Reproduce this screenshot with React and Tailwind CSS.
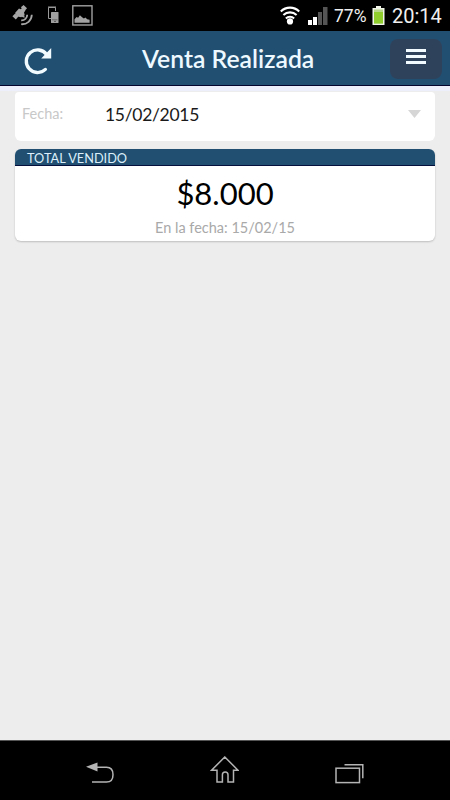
import React from 'react';

const SatelliteIcon = () => (
  <svg className="w-[22px] h-[21px]" viewBox="0 0 22 21" fill="none">
    <g fill="#a6a6a6">
      <path d="M3 8l4-4.6 1.6.8 2-1.6 2.8 3-1.4 2 .6 2.2-3.4 2.4-3.8-.6z" />
      <path d="M8.8 2.2L11.6 0 15 3.2l-2.2 2.6z" />
      <path d="M.4 11.2l2.8-2.6 3.2 3-2.6 3z" />
      <path d="M9.4 11.8l2.8-2.4.4 3.4z" />
    </g>
    <path d="M9.2 15.4c3.4.2 6-2.2 6-5.6M9.2 19.2c5.8.4 10.4-3.6 10.6-9.4" stroke="#a6a6a6" strokeWidth="1.8" />
  </svg>
);

const DevicesIcon = () => (
  <svg className="w-3 h-[18px]" viewBox="0 0 12 18" fill="none">
    <path d="M4 12.5H1.5V1.5H8.5V5" stroke="#999" strokeWidth="1" />
    <path d="M1 1h8" stroke="#999" strokeWidth="1" />
    <rect x="4" y="6" width="7.5" height="11" rx=".6" fill="#a0a0a0" />
    <path d="M5 13.8H10.5" stroke="#555" strokeWidth=".7" />
    <path d="M7 15.4h2" stroke="#444" strokeWidth=".8" />
  </svg>
);

const PictureIcon = () => (
  <svg className="w-[21px] h-[21px]" viewBox="0 0 21 21" fill="none">
    <rect x=".8" y=".8" width="19.2" height="19.2" stroke="#a0a0a0" strokeWidth="1.4" />
    <path d="M2.5 17.8v-3.6l2.1-2.3 1.5.8 1.8-2.5 2.2 2 1.8 1.4 1.5-1 1.8 1.6 2.4.6v3z" fill="#a3a3a3" />
  </svg>
);

const WifiIcon = () => (
  <svg className="w-5 h-[19px]" viewBox="0 0 20 19" fill="none" stroke="#fff" strokeWidth="2.1">
    <path d="M.8 5.4a13 13 0 0 1 18.4 0M3.4 9a9.6 9.6 0 0 1 13.2 0M5.9 12.4a5.8 5.8 0 0 1 8.2 0" />
    <circle cx="10" cy="15.4" r="3.1" fill="#fff" stroke="none" />
  </svg>
);

const SignalIcon = () => (
  <svg className="w-5 h-[18px]" viewBox="0 0 20 18">
    <rect x="0" y="13" width="4" height="5" fill="#fff" />
    <rect x="5" y="10" width="4" height="8" fill="#fff" />
    <rect x="10" y="5" width="4" height="13" fill="#555" />
    <rect x="15" y="0" width="4.5" height="18" fill="#555" />
  </svg>
);

const BatteryIcon = () => (
  <svg className="w-[13px] h-[19px]" viewBox="0 0 13 19">
    <path d="M4 0h5v2h3.5v17H.5V2H4z" fill="#f1f5ea" />
    <rect x="2" y="3.5" width="9" height="14" fill="#b9d88a" />
    <rect x="2" y="6" width="9" height="11.5" fill="#8fce2c" />
  </svg>
);

const RefreshIcon = () => (
  <svg className="w-7 h-7" viewBox="0 0 28 28" fill="none">
    <path d="M21.4 22.4A11.3 11.3 0 1 1 22.6 7.4" stroke="#f2fbff" strokeWidth="3.3" strokeLinecap="round" />
    <path d="M27.2 1v10.4H17.2l3.6-3.6z" fill="#f2fbff" />
  </svg>
);

const BackIcon = () => (
  <svg className="w-7 h-[22px]" viewBox="0 0 28 22" fill="none">
    <path d="M11 5.3h9.5c4.2 0 6.5 3 6.5 7.4s-2.3 7.3-6.5 7.3H6" stroke="#b4b4b4" strokeWidth="1.5" />
    <path d="M0 4.8L11.5.5v9z" fill="#b4b4b4" />
  </svg>
);

const HomeIcon = () => (
  <svg className="w-[29px] h-[27px]" viewBox="0 0 29 27" fill="none" stroke="#b4b4b4" strokeWidth="1.5">
    <path d="M14.8 1L28 14.2H23.5V26H18V18.8a2.8 2.8 0 0 0-5.6 0V26H7V14.2H1.6z" />
  </svg>
);

const RecentIcon = () => (
  <svg className="w-[29px] h-[21px]" viewBox="0 0 29 21" fill="none" stroke="#b4b4b4" strokeWidth="1.5">
    <rect x="1" y="5.2" width="23.5" height="14.4" />
    <path d="M9.5 1.7h18.3v13.5" />
  </svg>
);

const StatusBar = () => (
  <div className="h-[31px] shrink-0 bg-black flex items-start justify-between pl-3 pr-2">
    <div className="flex items-start">
      <div className="pt-[5px]"><SatelliteIcon /></div>
      <div className="pt-[6px] pl-[13px]"><DevicesIcon /></div>
      <div className="pt-[5px] pl-[13px]"><PictureIcon /></div>
    </div>
    <div className="flex items-start text-[#f0f0f0] font-[Roboto,sans-serif]">
      <div className="pt-[6px]"><WifiIcon /></div>
      <div className="pt-[7px] pl-2"><SignalIcon /></div>
      <span className="w-11 pl-[6px] text-[17.5px] leading-[33px] whitespace-nowrap">77%</span>
      <div className="pt-[6px]"><BatteryIcon /></div>
      <span className="w-[50px] ml-[7px] text-[20px] leading-[32px] whitespace-nowrap">20:14</span>
    </div>
  </div>
);

const Header = () => (
  <div className="h-[55px] shrink-0 bg-[#214f71] border-b border-[#04052e] flex items-start pl-6 pr-2">
    <button className="w-[118px] pt-4"><RefreshIcon /></button>
    <h1 className="flex-1 text-[#edf8ff] text-[24.75px] leading-[56px] font-semibold whitespace-nowrap">Venta Realizada</h1>
    <button className="mt-2 w-[52px] h-10 rounded-lg bg-[#2f425c] flex flex-col items-center gap-[3px] pt-[10px]">
      <span className="w-5 h-[3px] bg-[#f2fbff]" />
      <span className="w-5 h-[3px] bg-[#f2fbff]" />
      <span className="w-5 h-[3px] bg-[#f2fbff]" />
    </button>
  </div>
);

const App = () => {
  return (
    <div className="w-[450px] h-[800px] flex flex-col overflow-hidden bg-[#ededed] font-[Lato,sans-serif]">
      <StatusBar />
      <Header />
      <main className="flex-1 border-t-[5px] border-[#edf0fa] px-[15px]">
        <div className="mt-px h-[49px] bg-white rounded-b-md rounded-t-sm flex items-center pl-[7px] pr-[14px]">
          <span className="w-[83px] text-[14.5px] leading-[43px] h-[49px] text-[#c8c8c8]">Fecha:</span>
          <span className="flex-1 text-[17.5px] tracking-[-0.3px] leading-[46px] h-[49px] text-[#1a1a1a]">15/02/2015</span>
          <svg className="w-[13px] h-2 -mt-[5px]" viewBox="0 0 13 8">
            <path d="M0 0h13L6.5 8z" fill="#d6d6d6" />
          </svg>
        </div>
        <div className="mt-2 bg-white rounded-md overflow-hidden shadow-[0_1px_2px_rgba(0,0,0,0.2)]">
          <div className="h-[17px] bg-[#214f71] border-b border-[#06103c] pl-3 text-[12.75px] leading-[18px] text-[#dceffa]">
            TOTAL VENDIDO
          </div>
          <div className="h-[75px] text-center">
            <p className="text-[31px] leading-[54px] text-black">$8.000</p>
            <p className="text-[14.5px] leading-[16px] text-[#a9a9a9]">En la fecha: 15/02/15</p>
          </div>
        </div>
      </main>
      <nav className="h-[60px] shrink-0 bg-black border-t border-[#555] flex items-start pl-[86px]">
        <div className="mt-[21px]"><BackIcon /></div>
        <div className="mt-[15px] ml-[96px]"><HomeIcon /></div>
        <div className="mt-[22px] ml-[96px]"><RecentIcon /></div>
      </nav>
    </div>
  );
};

export default App;
